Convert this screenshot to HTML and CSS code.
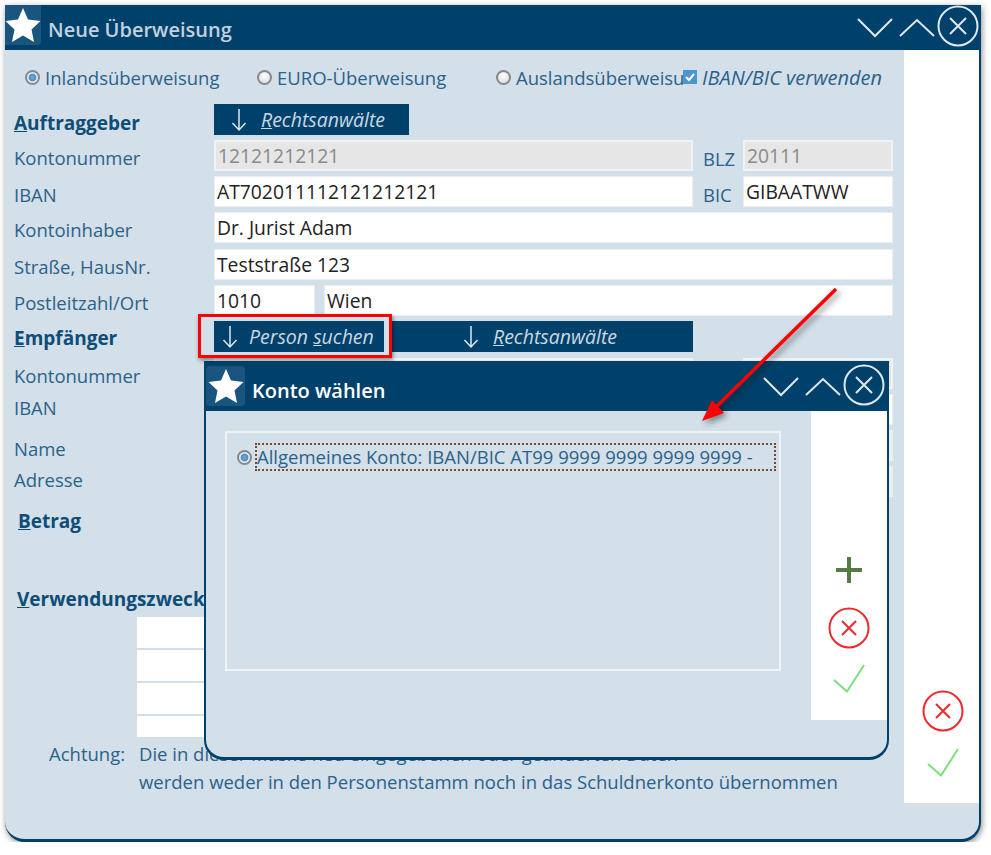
FILE: index.html
```html
<!DOCTYPE html>
<html lang="de">
<head>
    <meta charset="UTF-8">
    <title>Neue Überweisung</title>
    <link rel="stylesheet" href="styles.css">
</head>
<body>
    <div class="window">
        <div class="titlebar">
            <span class="star-tile">
                <svg viewBox="0 0 36 36" width="36" height="36"><polygon points="18,1 23,12.500 35.500,14 26.500,22.500 29,35 18,28.500 7,35 9.500,22.500 0.500,14 13,12.500" fill="#fff"/></svg>
            </span>
            <span class="title title-main">Neue Überweisung</span>
            <span class="controls">
                <svg viewBox="0 0 36 20" width="36" height="20"><polyline points="1,1 18,18 35,1"/></svg>
                <svg viewBox="0 0 36 20" width="36" height="20"><polyline points="1,18 18,2 35,18"/></svg>
                <svg viewBox="0 0 42 42" width="42" height="42"><circle cx="21" cy="21" r="19.500"/><path d="M13 13 L29 29 M29 13 L13 29"/></svg>
            </span>
        </div>
        <div class="window-body">
            <div class="form">
                <div class="radio-row">
                    <label class="radio-item item-inland"><span class="radio checked"></span>Inlandsüberweisung</label>
                    <label class="radio-item item-euro"><span class="radio"></span>EURO-Überweisung</label>
                    <label class="radio-item item-ausland"><span class="radio"></span>Auslandsüberweisung</label>
                    <label class="check-item">
                        <span class="check">
                            <svg viewBox="0 0 14 14" width="14" height="14"><polyline points="3,7 6,10 11,4"/></svg>
                        </span>IBAN/BIC verwenden
                    </label>
                </div>

                <div class="fields">
                    <div class="heading"><u>A</u>uftraggeber</div>
                    <div class="btn btn-first"><svg class="arrow" viewBox="0 0 16 24" width="16" height="24"><path d="M8 1 V22 M1.500 15 L8 22 L14.500 15"/></svg><span><u>R</u>echtsanwälte</span></div>

                    <div class="label">Kontonummer</div>
                    <div class="field field-off span-wide">12121212121</div>
                    <div class="label label-side">BLZ</div>
                    <div class="field field-off span-side">20111</div>

                    <div class="label label-iban">IBAN</div>
                    <div class="field span-wide">AT702011112121212121</div>
                    <div class="label label-side">BIC</div>
                    <div class="field span-side">GIBAATWW</div>

                    <div class="label">Kontoinhaber</div>
                    <div class="field span-full">Dr. Jurist Adam</div>

                    <div class="label">Straße, HausNr.</div>
                    <div class="field span-full">Teststraße 123</div>

                    <div class="label">Postleitzahl/Ort</div>
                    <div class="field span-zip">1010</div>
                    <div class="field span-city">Wien</div>

                    <div class="heading heading-payee"><u>E</u>mpfänger</div>
                    <div class="btn-pair">
                        <div class="btn btn-search"><svg class="arrow" viewBox="0 0 16 24" width="16" height="24"><path d="M8 1 V22 M1.500 15 L8 22 L14.500 15"/></svg><span>Person <u>s</u>uchen</span></div>
                        <div class="btn btn-office"><svg class="arrow" viewBox="0 0 16 24" width="16" height="24"><path d="M8 1 V22 M1.500 15 L8 22 L14.500 15"/></svg><span><u>R</u>echtsanwälte</span></div>
                    </div>

                    <div class="label">Kontonummer</div>
                    <div class="field field-off span-wide"></div>
                    <div class="field field-off span-side"></div>

                    <div class="label label-tight">IBAN</div>
                    <div class="field span-wide"></div>
                    <div class="field span-side"></div>

                    <div class="label label-low">Name</div>
                    <div class="field field-pale span-full"></div>

                    <div class="label label-tight">Adresse</div>
                    <div class="field field-pale span-full"></div>
                </div>

                <div class="heading heading-betrag"><u>B</u>etrag</div>
                <div class="heading heading-zweck"><u>V</u>erwendungszweck</div>
                <div class="purpose">
                    <div class="purpose-line"></div>
                    <div class="purpose-line"></div>
                    <div class="purpose-line"></div>
                    <div class="purpose-line purpose-last"></div>
                </div>
                <div class="note">
                    <div class="note-label">Achtung:</div>
                    <div>Die in dieser Maske neu eingegebenen oder geänderten Daten<br>werden weder in den Personenstamm noch in das Schuldnerkonto übernommen</div>
                </div>
            </div>

            <div class="side side-main">
                <svg class="side-icon" viewBox="0 0 42 42" width="42" height="42"><circle class="no" cx="21" cy="21" r="19.500"/><path class="no" d="M14 14 L28 28 M28 14 L14 28"/></svg>
                <svg class="side-icon" viewBox="0 0 36 30" width="36" height="30"><polyline class="yes" points="3,16 16,27.500 33,1"/></svg>
            </div>
        </div>

        <div class="dialog">
            <div class="titlebar titlebar-dialog">
                <span class="star-tile">
                    <svg viewBox="0 0 36 36" width="36" height="36"><polygon points="18,1 23,12.500 35.500,14 26.500,22.500 29,35 18,28.500 7,35 9.500,22.500 0.500,14 13,12.500" fill="#fff"/></svg>
                </span>
                <span class="title title-dialog">Konto wählen</span>
                <span class="controls">
                    <svg viewBox="0 0 36 20" width="36" height="20"><polyline points="1,1 18,18 35,1"/></svg>
                    <svg viewBox="0 0 36 20" width="36" height="20"><polyline points="1,18 18,2 35,18"/></svg>
                    <svg viewBox="0 0 42 42" width="42" height="42"><circle cx="21" cy="21" r="19.500"/><path d="M13 13 L29 29 M29 13 L13 29"/></svg>
                </span>
            </div>
            <div class="dialog-body">
                <div class="dialog-main">
                    <div class="group">
                        <div class="choice">
                            <span class="radio checked"></span>
                            <span class="choice-text">Allgemeines Konto: IBAN/BIC AT99 9999 9999 9999 9999 -</span>
                        </div>
                    </div>
                </div>
                <div class="side side-dialog">
                    <svg class="side-icon icon-plus" viewBox="0 0 28 28" width="28" height="28"><path class="plus" d="M14 1 V27 M1 14 H27"/></svg>
                    <svg class="side-icon" viewBox="0 0 42 42" width="42" height="42"><circle class="no" cx="21" cy="21" r="19.500"/><path class="no" d="M14 14 L28 28 M28 14 L14 28"/></svg>
                    <svg class="side-icon" viewBox="0 0 36 30" width="36" height="30"><polyline class="yes" points="3,16 16,27.500 33,1"/></svg>
                </div>
            </div>
        </div>
    </div>

    <div class="mark-box"></div>
    <svg class="mark-arrow" viewBox="0 0 991 855" width="991" height="855">
        <line x1="836" y1="289" x2="716" y2="407"/>
        <polygon points="702,421 712,400 724,413"/>
    </svg>
</body>
</html>
```

FILE: styles.css
```css
body {
    margin: 0;
    background-color: #fff;
    font-family: "Open Sans", sans-serif;
    font-size: 18.500px;
    color: #2b628a;
    overflow: hidden;
}
.window {
    position: relative;
    width: 976px;
    height: 837px;
    margin: 5px 0 0 5px;
    box-sizing: border-box;
    display: flex;
    flex-direction: column;
    background-color: #d3dfe9;
    border-right: 2px solid #00416b;
    border-bottom: 3px solid #00416b;
    border-radius: 0 0 20px 20px;
    box-shadow: 1px 2px 6px rgba(0, 0, 0, 0.45);
}
.titlebar {
    height: 45px;
    flex: none;
    display: flex;
    align-items: center;
    background-color: #00416b;
    margin-right: -2px;
}
.star-tile {
    width: 36px;
    height: 40px;
    align-self: flex-start;
    display: flex;
    align-items: center;
    justify-content: center;
    background-color: #1a5580;
    border-radius: 0 0 4px 0;
}
.title {
    font-weight: 600;
    font-size: 20px;
}
.title-main {
    margin-left: 7px;
    margin-top: 3px;
    color: #c0d2df;
}
.controls {
    margin-left: auto;
    margin-right: 2px;
    display: flex;
    align-items: center;
    gap: 5px;
}
.controls svg {
    fill: none;
    stroke: #dfe8ee;
    stroke-width: 2;
}
.controls svg:first-child {
    margin-right: 1px;
}
.controls svg:nth-child(3) {
    margin-left: -3px;
    margin-top: -4px;
}
.window-body {
    flex: 1;
    display: flex;
    min-height: 0;
}
.form {
    width: 900px;
    padding-left: 9px;
    box-sizing: border-box;
}
.radio-row {
    height: 54px;
    display: flex;
    align-items: center;
    padding-left: 11px;
}
.radio-item {
    display: flex;
    align-items: center;
    gap: 5px;
    white-space: nowrap;
    overflow: hidden;
    flex: none;
}
.item-inland { width: 232px; }
.item-euro { width: 239px; }
.item-ausland { width: 187px; }
.radio {
    width: 15px;
    height: 15px;
    flex: none;
    box-sizing: border-box;
    border: 2px solid #84898e;
    border-radius: 50%;
    background: radial-gradient(circle at 50% 35%, #fff, #d6d6d6);
}
.radio.checked {
    background: radial-gradient(circle, #6fa9dc 0, #4d8fc4 45%, #e4eaef 55%);
}
.check-item {
    display: flex;
    align-items: center;
    gap: 5px;
    white-space: nowrap;
    font-style: italic;
    font-size: 20px;
}
.check {
    width: 14px;
    height: 14px;
    flex: none;
    display: flex;
    background-color: #4a97cf;
}
.check svg {
    fill: none;
    stroke: #fff;
    stroke-width: 2;
}
.fields {
    display: grid;
    grid-template-columns: 200px 101px 9px 369px 10px 40px 150px;
    grid-template-rows: 36px 36px 36px 37px 36px 36px 37px 36px 36px 36px 36px;
}
.label {
    grid-column: 1;
    padding-top: 5px;
    white-space: nowrap;
}
.label-side {
    grid-column: 6;
    padding-top: 6px;
}
.label-iban { padding-top: 6px; }
.label-tight { padding-top: 1px; }
.label-low { padding-top: 6px; }
.heading {
    grid-column: 1;
    padding-top: 6px;
    font-weight: 700;
    font-size: 19px;
    color: #0e4d78;
    white-space: nowrap;
}
.heading-payee { padding-top: 4px; }
.field {
    height: 31px;
    box-sizing: border-box;
    padding: 0 2px;
    line-height: 29px;
    background-color: #fff;
    border: 1px solid #e8eef3;
    color: #222;
    font-size: 19.300px;
    white-space: nowrap;
}
.field-off {
    background-color: #e6e6e6;
    border: 2px solid #f0f3f5;
    color: #8a8a8a;
    line-height: 27px;
}
.field-pale {
    background-color: #eaeff4;
}
.span-wide { grid-column: 2 / 5; }
.span-side { grid-column: 7; }
.span-full { grid-column: 2 / 8; }
.span-zip { grid-column: 2; }
.span-city { grid-column: 4 / 8; }
.btn {
    height: 31px;
    display: flex;
    align-items: center;
    background-color: #00416b;
    color: #c9d8e3;
    font-style: italic;
    font-size: 19.500px;
    white-space: nowrap;
}
.btn-first {
    grid-column: 2 / 5;
    width: 195px;
    padding-left: 17px;
    box-sizing: border-box;
    gap: 14px;
}
.btn-pair {
    grid-column: 2 / 5;
    display: flex;
    gap: 7px;
}
.btn-search {
    width: 170px;
    padding-left: 8px;
    box-sizing: border-box;
    gap: 11px;
}
.btn-office {
    flex: 1;
    padding-left: 72px;
    gap: 14px;
}
.arrow {
    flex: none;
    fill: none;
    stroke: #dfe8ee;
    stroke-width: 1.500;
}
.heading-betrag {
    margin-left: 4px;
}
.heading-zweck {
    margin-left: 3px;
    margin-top: 46px;
}
.purpose {
    margin: 5px 0 0 123px;
    width: 300px;
    display: flex;
    flex-direction: column;
    gap: 2px;
}
.purpose-line {
    height: 31px;
    background-color: #fff;
}
.purpose-last { height: 21px; }
.note {
    display: flex;
    margin: 3px 0 0 35px;
    line-height: 28px;
}
.note-label { width: 90px; flex: none; }
.side {
    background-color: #fff;
    display: flex;
    flex-direction: column;
    align-items: center;
    flex: none;
}
.side-main {
    width: 75px;
    height: 753px;
    justify-content: flex-end;
    padding: 0 0 25px 3px;
    box-sizing: border-box;
    gap: 16px;
}
.no {
    fill: none;
    stroke: #f1282e;
    stroke-width: 2;
}
.yes {
    fill: none;
    stroke: #79e07d;
    stroke-width: 2;
}
.plus {
    fill: none;
    stroke: #567a45;
    stroke-width: 4;
}
.dialog {
    position: absolute;
    left: 199px;
    top: 356px;
    width: 685px;
    height: 399px;
    box-sizing: border-box;
    display: flex;
    flex-direction: column;
    background-color: #d3dfe9;
    border: solid #00416b;
    border-width: 0 2px 3px 2px;
    border-radius: 0 0 20px 20px;
}
.titlebar-dialog {
    height: 50px;
    margin: 0 -2px;
    padding-left: 2px;
}
.titlebar-dialog .star-tile {
    width: 39px;
    height: 40px;
    margin-top: 5px;
    border-radius: 4px;
}
.titlebar-dialog .controls {
    margin-top: 2px;
    margin-right: 4px;
}
.title-dialog {
    margin-left: 7px;
    margin-top: 8px;
    color: #fff;
}
.dialog-body {
    flex: 1;
    display: flex;
    min-height: 0;
}
.dialog-main {
    flex: 1;
    padding: 20px 30px 0 19px;
}
.group {
    height: 240px;
    box-sizing: border-box;
    border: 2px solid #eef3f6;
    padding: 10px 3px 0 10px;
}
.choice {
    display: flex;
    align-items: center;
    gap: 3px;
}
.choice-text {
    flex: 1;
    height: 28px;
    line-height: 24px;
    box-sizing: border-box;
    border: 2px dotted #7a4a2a;
    padding-left: 0;
    white-space: nowrap;
}
.side-dialog {
    width: 76px;
    height: 309px;
    justify-content: flex-end;
    padding-bottom: 26px;
    box-sizing: border-box;
    gap: 15px;
}
.icon-plus {
    margin-bottom: 8px;
}
.mark-box {
    position: absolute;
    left: 198px;
    top: 314px;
    width: 194px;
    height: 44px;
    box-sizing: border-box;
    border: 3px solid #f00;
    box-shadow: 1px 2px 4px rgba(0, 0, 0, 0.45);
}
.mark-arrow {
    position: absolute;
    left: 0;
    top: 0;
    pointer-events: none;
    filter: drop-shadow(3px 3px 3px rgba(0, 0, 0, 0.45));
}
.mark-arrow line {
    stroke: #f00;
    stroke-width: 3.500;
}
.mark-arrow polygon {
    fill: #f00;
}
```
